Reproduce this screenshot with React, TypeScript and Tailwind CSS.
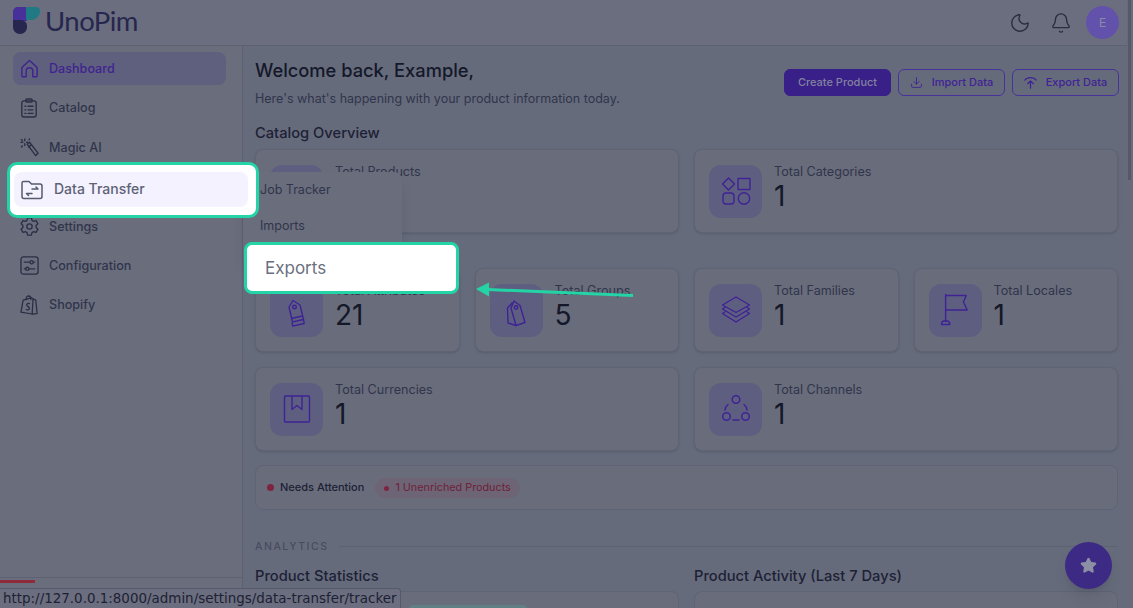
import { Bell, Download, Moon, Star } from "lucide-react";
import type { ReactNode } from "react";

const IconHome = (
  <svg viewBox="0 0 20 20" className="w-[19px] h-[19px]" fill="none" stroke="currentColor" strokeWidth="1.500" strokeLinejoin="round">
    <path d="M2 9 10 1.500 18 9v8.500c0 .8-.5 1.200-1.200 1.200H13.500v-6c0-2-1.500-3.500-3.500-3.500s-3.500 1.500-3.500 3.500v6H3.200C2.500 18.700 2 18.300 2 17.500z" />
  </svg>
);
const IconCatalog = (
  <svg viewBox="0 0 20 22" className="w-[18px] h-[20px]" fill="none" stroke="currentColor" strokeWidth="1.500" strokeLinecap="round" strokeLinejoin="round">
    <rect x="2" y="3" width="16" height="18" rx="2.500" />
    <rect x="6.500" y="1" width="7" height="3.500" rx="1" />
    <path d="M5.500 9h1M9 9h5.500M5.500 13h1M9 13h5.500M5.500 17h1M9 17h5.500" />
  </svg>
);
const IconWand = (
  <svg viewBox="0 0 20 20" className="w-[19px] h-[19px]" fill="none" stroke="currentColor" strokeWidth="1.400" strokeLinecap="round" strokeLinejoin="round">
    <path d="m7.500 6.500 2.500-2 9 11.500-2.500 2.500z" />
    <path d="M9 9.500l2.500-2" />
    <path d="M5 1v2M5 6v2M1 4.500h2M7 4.500h1M1.500 9.500l1-1M1.500 1.500l1 1M10 1l-.5 1" />
  </svg>
);
const IconCog = (
  <svg viewBox="0 0 20 20" className="w-[19px] h-[19px]" fill="none" stroke="currentColor" strokeWidth="1.400" strokeLinejoin="round">
    <path d="M8 1h4l.6 2.600 1.700 1 2.600-.8 2 3.400-2 1.800v2l2 1.800-2 3.400-2.600-.8-1.700 1L12 19H8l-.6-2.600-1.700-1-2.600.8-2-3.400 2-1.800V9L1.100 7.200l2-3.400 2.600.8 1.700-1z" />
    <circle cx="10" cy="10" r="2.800" />
  </svg>
);
const IconSliders = (
  <svg viewBox="0 0 20 20" className="w-[19px] h-[19px]" fill="none" stroke="currentColor" strokeWidth="1.400">
    <rect x="1" y="1" width="18" height="18" rx="2.500" />
    <path d="M4 6.500h6.500M14 6.500h2M4 13.500h2M9.500 13.500H16" />
    <circle cx="12.200" cy="6.500" r="1.700" />
    <circle cx="7.700" cy="13.500" r="1.700" />
  </svg>
);
const IconShopify = (
  <svg viewBox="0 0 20 22" className="w-[18px] h-[20px]" fill="none" stroke="currentColor" strokeWidth="1.400" strokeLinejoin="round" strokeLinecap="round">
    <path d="M3.500 5.500 12.500 3l2 1.200L17.500 5.500 19 20.500 13.500 21 1 19z" />
    <path d="M7 5V3.500C7 2 8 1 9.500 1s2.500 1 2.500 2.500V5M14.500 4.200 13.500 21" />
    <path d="M10.500 9.500C9 9 7.500 9.500 7.500 11c0 1.800 3 1.800 3 3.700 0 1.500-1.700 2-3.500 1.300" />
  </svg>
);
const IconTransfer = (
  <svg viewBox="0 0 22 20" className="w-[22px] h-[20px]" fill="none" stroke="#555a70" strokeWidth="1.500" strokeLinejoin="round" strokeLinecap="round">
    <path d="M1 15V3c0-1 .5-1.500 1.500-1.500H8L10.500 4h8.500c1.300 0 2 .7 2 2v10.500c0 1.300-.7 2-2 2H3c-1.300 0-2-.7-2-2z" />
    <path d="M11 9h6l-2-2M11 13.500H5.500l2 2" />
  </svg>
);
const IconUpload = (
  <svg viewBox="0 0 16 16" className="w-[13px] h-[13px]" fill="none" stroke="currentColor" strokeWidth="1.500" strokeLinecap="round" strokeLinejoin="round">
    <path d="M1 5c1.500-2 4-3 7-3s5.500 1 7 3M8 15V6M4.500 9.500 8 6l3.500 3.500" />
  </svg>
);
const IconTag = (
  <svg viewBox="0 0 32 32" className="w-[32px] h-[32px] mt-[7px]" fill="none" stroke="currentColor" strokeWidth="1.400" strokeLinejoin="round">
    <path d="M12 2.500 19 7l3.500 14.500-11 2.500L8 9z" />
    <circle cx="13.500" cy="9" r="1.800" />
    <path d="m10 20.500 11.500-2.500M11 24.500l.7 3.500 11.500-2.500-.7-4" />
  </svg>
);
const IconTags = (
  <svg viewBox="0 0 32 32" className="w-[32px] h-[32px] mt-[7px]" fill="none" stroke="currentColor" strokeWidth="1.400" strokeLinejoin="round">
    <path d="M14 3l6 4.500 5 17-9 3L11 10z" />
    <circle cx="16" cy="9.500" r="1.700" />
    <path d="M12.500 4.500 7.500 10l.5 15 8 2.500" />
  </svg>
);
const IconShapes = (
  <svg viewBox="0 0 32 32" className="w-[32px] h-[32px]" fill="none" stroke="currentColor" strokeWidth="1.400" strokeLinejoin="round">
    <path d="M8.500 3 14.500 9l-6 6-6-6z" />
    <rect x="18" y="3.500" width="12" height="11" rx="0.500" />
    <rect x="3" y="18" width="11" height="11" rx="3" />
    <circle cx="24" cy="23.500" r="5.700" />
  </svg>
);
const IconLayers = (
  <svg viewBox="0 0 32 32" className="w-[32px] h-[32px]" fill="none" stroke="currentColor" strokeWidth="1.400" strokeLinejoin="round">
    <path d="M16 3 29.500 11 16 18.500 2.500 11z" />
    <path d="M5.500 13 2.500 15 16 23l13.500-8-3-2" />
    <path d="M5.500 17.500 2.500 19.500 16 28l13.500-8.500-3-2" />
  </svg>
);
const IconFlag = (
  <svg viewBox="0 0 32 36" className="w-[30px] h-[34px]" fill="none" stroke="currentColor" strokeWidth="1.500" strokeLinejoin="round">
    <path d="M6 1v30" />
    <path d="M6 2.500h22l-3 7 4 8.500H6" />
    <path d="M1.500 33.500c0-3 1.500-4 4.500-4s4.500 1 4.500 4z" />
  </svg>
);
const IconBook = (
  <svg viewBox="0 0 32 32" className="w-[32px] h-[32px]" fill="none" stroke="currentColor" strokeWidth="1.400" strokeLinejoin="round">
    <rect x="3.500" y="3" width="25" height="26" rx="1" />
    <path d="M11 3v13.500l5-4 5 4V3" />
  </svg>
);
const IconChannels = (
  <svg viewBox="0 0 32 32" className="w-[32px] h-[32px]" fill="none" stroke="currentColor" strokeWidth="1.500">
    <circle cx="16" cy="6.500" r="3.800" />
    <circle cx="6.500" cy="23.500" r="3.800" />
    <circle cx="25.500" cy="23.500" r="3.800" />
    <path d="M13 27h6M5 17c.3-2.500 1.300-4.300 3-5.500M27 17c-.3-2.500-1.300-4.300-3-5.500" strokeLinecap="round" />
  </svg>
);

function NavItem({ icon, label, active, className = "" }: { icon: ReactNode; label: string; active?: boolean; className?: string }) {
  return (
    <div className={`h-[33px] rounded-lg flex items-center gap-[10px] pl-[6px] text-[12.600px] font-medium ${active ? "bg-[#5f5f7e] text-[#3f2490]" : "text-[#30354b]"} ${className}`}>
      <span className={`w-[20px] flex justify-center ${active ? "text-[#3f2490]" : "text-[#2a2f45]"}`}>{icon}</span>
      <span className="pt-[2px]">{label}</span>
    </div>
  );
}

function StatCard({ icon, label, value }: { icon: ReactNode; label: string; value: string }) {
  return (
    <div className="h-[84px] rounded-lg border border-[#5f6374] bg-[#696c7b] shadow-sm flex items-center gap-3 px-[14px]">
      <div className="w-[53px] h-[53px] rounded-xl bg-[#5e5f80] text-[#3f2394] flex items-center justify-center shrink-0">{icon}</div>
      <div className="-mt-[6px]">
        <p className="text-[12.600px] leading-[16px] text-[#30354b]">{label}</p>
        <p className="text-[28px] leading-[32px] text-[#141829]">{value}</p>
      </div>
    </div>
  );
}

export default function App() {
  return (
    <div className="relative w-[1133px] h-[608px] overflow-hidden bg-[#666b7c] font-['Inter',sans-serif]">
      {/* header */}
      <header className="h-[46px] bg-[#6b6e7e] border-b border-[#5d6172] flex items-center justify-between pl-[13px] pr-[14px]">
        <div className="flex items-center gap-[5px]">
          <svg viewBox="0 0 27 27" className="w-[27px] h-[27px] -mt-[4px]">
            <path d="M0 14V5c0-3 2-5 5-5h9v14z" fill="#47309a" />
            <path d="M13 0h10c2.500 0 4 1.500 4 4s-1 4-2.500 6c-1.500 2-3.500 3-6 3H13z" fill="#1f7a83" />
            <path d="M0 13h8c3.500 0 6 2.500 6 6v1c0 4-3 7-7 7s-7-3-7-7z" fill="#26264e" />
          </svg>
          <span className="font-['Lato',sans-serif] text-[27.500px] leading-none text-[#26264e] tracking-[-0.500px] -mt-[4px]">UnoPim</span>
        </div>
        <div className="flex items-center">
          <Moon size={22} strokeWidth={1.500} className="text-[#282d42]" />
          <Bell size={22} strokeWidth={1.500} className="text-[#282d42] ml-[19px]" />
          <div className="w-[33px] h-[33px] rounded-full bg-[#6252ab] text-[#8a8aa5] text-[12px] flex items-center justify-center ml-[14px]">E</div>
        </div>
      </header>

      <div className="flex">
        {/* sidebar */}
        <aside className="w-[243px] h-[562px] shrink-0 border-r border-[#5d6172] bg-[#6a6d7c] relative pt-[6px] pl-[13px] pr-[16px]">
          <nav className="flex flex-col gap-[6px]">
            <NavItem active label="Dashboard" icon={IconHome} />
            <NavItem label="Catalog" icon={IconCatalog} />
            <NavItem label="Magic AI" icon={IconWand} className="mt-[1px]" />
            <div className="h-[34px]" />
            <NavItem label="Settings" icon={IconCog} />
            <NavItem label="Configuration" icon={IconSliders} />
            <NavItem label="Shopify" icon={IconShopify} />
          </nav>
          <div className="absolute left-0 right-0 top-[531px] border-t border-[#5d6172]" />
          <div className="absolute left-0 top-[534px] w-[35px] h-[3px] bg-[#8f2a3a]" />
        </aside>

        {/* main */}
        <main className="flex-1 pl-[12px] pr-[15px] pt-[13px]">
          <div className="flex justify-between">
            <div>
              <h1 className="text-[18.300px] leading-[22px] font-medium text-[#141829]">Welcome back, Example,</h1>
              <p className="text-[12.500px] leading-[16px] mt-[10px] text-[#30354b]">Here's what's happening with your product information today.</p>
            </div>
            <div className="flex gap-[7px] mt-[10px] -mr-[1px] text-[11px] font-medium">
              <div className="w-[107px] h-[27px] rounded-md bg-[#391f88] border border-[#391f88] text-[#82829f] flex items-center justify-center">Create Product</div>
              <div className="w-[107px] h-[27px] rounded-md border border-[#47329c] text-[#3f2394] flex items-center justify-center gap-[9px]">
                <Download size={13} strokeWidth={1.700} /> Import Data
              </div>
              <div className="w-[107px] h-[27px] rounded-md border border-[#47329c] text-[#3f2394] flex items-center justify-center gap-[9px]">
                {IconUpload} Export Data
              </div>
            </div>
          </div>

          <h2 className="text-[14.700px] leading-[20px] font-medium text-[#1d2135] mt-[16px]">Catalog Overview</h2>
          <div className="grid grid-cols-2 gap-x-[15px] mt-[6px]">
            <StatCard icon={IconShapes} label="Total Products" value="1" />
            <StatCard icon={IconShapes} label="Total Categories" value="1" />
          </div>
          <div className="grid grid-cols-4 gap-x-[15px] mt-[35px]">
            <StatCard icon={IconTag} label="Total Attributes" value="21" />
            <StatCard icon={IconTags} label="Total Groups" value="5" />
            <StatCard icon={IconLayers} label="Total Families" value="1" />
            <StatCard icon={IconFlag} label="Total Locales" value="1" />
          </div>
          <div className="grid grid-cols-2 gap-x-[15px] mt-[15px]">
            <StatCard icon={IconBook} label="Total Currencies" value="1" />
            <StatCard icon={IconChannels} label="Total Channels" value="1" />
          </div>

          <div className="h-[45px] mt-[14px] rounded-lg border border-[#5f6374] bg-[#696c7b] flex items-center px-[11px] text-[11px] font-medium">
            <span className="w-[7px] h-[7px] rounded-full bg-[#7f2440] mr-[6px]" />
            <span className="text-[#1d2135]">Needs Attention</span>
            <span className="ml-[11px] h-[20px] pl-[9px] pr-[9px] pt-[1px] rounded-full bg-[#6d6476] text-[#6f2238] font-normal text-[10.800px] flex items-center gap-[6px]">
              <span className="w-[5px] h-[5px] rounded-full bg-[#7f2440]" />1 Unenriched Products
            </span>
          </div>

          <div className="flex items-center gap-[11px] mt-[29px]">
            <span className="text-[10.500px] tracking-[1.500px] font-medium text-[#484c60]">ANALYTICS</span>
            <div className="flex-1 border-t border-[#5d6172]" />
          </div>
          <div className="grid grid-cols-2 gap-x-[15px] mt-[11px]">
            <div>
              <h2 className="text-[14.700px] leading-[20px] font-medium text-[#1d2135]">Product Statistics</h2>
              <div className="h-[60px] mt-[5px] rounded-lg border border-[#5f6374] bg-[#696c7b] pt-[13px] pl-[153px]">
                <div className="w-[118px] h-[8px] rounded-t bg-[#5f7f85]" />
              </div>
            </div>
            <div>
              <h2 className="text-[14.700px] leading-[20px] font-medium text-[#1d2135]">Product Activity (Last 7 Days)</h2>
              <div className="h-[60px] mt-[5px] rounded-lg border border-[#5f6374] bg-[#696c7b]" />
            </div>
          </div>
        </main>
      </div>

      {/* scrollbar */}
      <div className="absolute top-0 right-0 bottom-0 w-[6px] bg-[#666a79]">
        <div className="w-[3px] h-[180px] ml-[1px] bg-[#54586a]" />
      </div>

      {/* flyout behind the tour highlight */}
      <div className="absolute left-[243px] top-[172px] w-[159px] h-[90px] bg-[#6a6d7c] rounded-r-lg shadow-lg text-[12.500px] text-[#30354b] pl-[17px] pt-[9px] flex flex-col gap-[19px]">
        <span className="leading-[17px]">Job Tracker</span>
        <span className="leading-[17px]">Imports</span>
      </div>

      {/* highlighted nav item */}
      <div className="absolute left-[7px] top-[162px] w-[252px] h-[56px] rounded-[10px] bg-white border-[3px] border-[#24d3a6] pl-[4px] pr-[8px] pt-[7px]">
        <div className="h-[35px] rounded-lg bg-[#f4f2fe] flex items-center gap-[11px] pl-[7px] text-[14px] font-medium text-[#5d6277]">
          {IconTransfer}
          <span className="-mt-[2px]">Data Transfer</span>
        </div>
      </div>

      {/* highlighted submenu item */}
      <div className="absolute left-[244px] top-[242px] w-[215px] h-[52px] rounded-lg bg-white border-[3px] border-[#24d3a6] pl-[18px] pt-[2px] flex items-center text-[17px] text-[#6b7080]">
        Exports
      </div>

      {/* arrow */}
      <svg className="absolute left-[470px] top-[278px]" width="170" height="24" viewBox="0 0 170 24">
        <path d="M163 17.500 18 11.500" stroke="#24d3a6" strokeWidth="3" fill="none" />
        <path d="M6 11 19 4.500v14z" fill="#24d3a6" />
      </svg>

      {/* floating button */}
      <div className="absolute left-[1065px] top-[542px] w-[47px] h-[47px] rounded-full bg-[#3d2a85] shadow-lg flex items-center justify-center">
        <Star size={17} fill="#8d8fa5" stroke="#8d8fa5" />
      </div>

      {/* browser status bubble */}
      <div className="absolute left-0 bottom-0 w-[401px] h-[20px] bg-[#6b6e7e] border-t border-r border-[#55596a] rounded-tr-[4px] pl-[3px] font-['DejaVu_Sans',sans-serif] text-[13.450px] leading-[20px] text-[#1d2135] whitespace-nowrap">
        http://127.0.0.1:8000/admin/settings/data-transfer/tracker
      </div>
    </div>
  );
}
